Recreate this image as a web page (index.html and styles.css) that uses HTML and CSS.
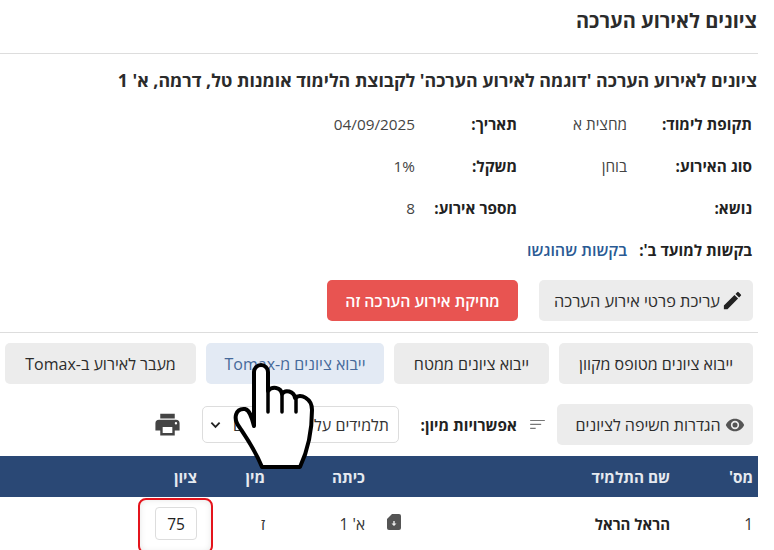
FILE: index.html
```html
<!DOCTYPE html>
<html lang="he" dir="rtl">
<head>
<meta charset="utf-8">
<title>ציונים לאירוע הערכה</title>
<link rel="stylesheet" href="styles.css">
</head>
<body>
<main class="page">
  <h1 class="title">ציונים לאירוע הערכה</h1>
  <h2 class="subtitle">ציונים לאירוע הערכה 'דוגמה לאירוע הערכה' לקבוצת הלימוד אומנות טל, דרמה, א' 1</h2>
  <div class="info">
    <b class="k1">תקופת לימוד:</b><span>מחצית א</span><b>תאריך:</b><span>04/09/2025</span>
    <b class="k1">סוג האירוע:</b><span>בוחן</span><b>משקל:</b><span>1%</span>
    <b class="k1">נושא:</b><span></span><b>מספר אירוע:</b><span>8</span>
    <b class="k1">בקשות למועד ב':</b><a class="link wide" href="#">בקשות שהוגשו</a>
  </div>
  <div class="actions">
    <button class="btn edit"><svg class="ic" viewBox="0 0 24 24"><path d="M3 17.25V21h3.75L17.81 9.94l-3.75-3.75L3 17.25zM20.71 7.04a1 1 0 0 0 0-1.41l-2.34-2.34a1 1 0 0 0-1.41 0l-1.83 1.83 3.75 3.75 1.83-1.83z"/></svg>עריכת פרטי אירוע הערכה</button>
    <button class="btn danger">מחיקת אירוע הערכה זה</button>
  </div>
  <div class="imports">
    <button class="btn b1">ייבוא ציונים מטופס מקוון</button>
    <button class="btn b2">ייבוא ציונים ממטח</button>
    <button class="btn b3 active">ייבוא ציונים מ-Tomax</button>
    <button class="btn b4">מעבר לאירוע ב-Tomax</button>
  </div>
  <div class="tools">
    <button class="btn eye"><svg class="ic ic-eye" viewBox="0 0 24 24"><path d="M12 4.5C7 4.5 2.73 7.61 1 12c1.73 4.39 6 7.5 11 7.5s9.27-3.11 11-7.5c-1.73-4.39-6-7.5-11-7.5zM12 17a5 5 0 1 1 0-10 5 5 0 0 1 0 10zm0-8a3 3 0 1 0 0 6 3 3 0 0 0 0-6z"/></svg>הגדרות חשיפה לציונים</button>
    <svg class="sort" viewBox="0 0 16 12"><path d="M0 1h16v1.3H0zM0 5.3h12v1.3H0zM0 9.6h6v1.3H0z"/></svg>
    <b class="sort-label">אפשרויות מיון:</b>
    <div class="select"><span>תלמידים על פי שמותיהם</span><svg class="chev" viewBox="0 0 12 8"><path d="M1.5 1.5 6 6l4.5-4.5" fill="none" stroke="#222" stroke-width="2"/></svg></div>
    <svg class="print" viewBox="0 0 24 24"><path d="M19 8H5a3 3 0 0 0-3 3v6h4v4h12v-4h4v-6a3 3 0 0 0-3-3zm-3 11H8v-5h8v5zm3-7a1 1 0 1 1 0-2 1 1 0 0 1 0 2zM18 3H6v4h12V3z"/></svg>
  </div>
  <div class="grid head">
    <span>מס'</span><span>שם התלמיד</span><span>כיתה</span><span>מין</span><span>ציון</span>
  </div>
  <div class="grid row">
    <span class="num">1</span>
    <b class="name">הראל הראל</b>
    <span class="cls">א' 1</span>
    <span class="gender">ז</span>
    <span class="grade"><input class="grade-input" value="75" aria-label="ציון"></span>
    <svg class="file" viewBox="0 0 14 16"><path d="M5 0h7a2 2 0 0 1 2 2v12a2 2 0 0 1-2 2H2a2 2 0 0 1-2-2V5z" fill="#555"/><path d="M6.3 7h1.4v2.5h1.8L7 12 4.500 9.500h1.800z" fill="#eee"/></svg>
  </div>
</main>
<svg class="hand" viewBox="230 358 90 116"><path d="M254 426V372a7 7 0 0 1 14 0v19c4-5 13-4 14 3 3-5 12-3 13 4 5-5 17 0 17 12 0 20-4 40-12 57h-38c-7-17-14-27-22-39-8-10-4-20 5-19 5 1 7 9 9 17z" fill="#fff" stroke="#000" stroke-width="4" stroke-linejoin="round"/><path d="M268 391v21M282 394v18M296 398v14" fill="none" stroke="#000" stroke-width="3.5" stroke-linecap="round"/></svg>
</body>
</html>
```
FILE: styles.css
```css
* { box-sizing: border-box; }
html, body { margin: 0; height: 550px; overflow: hidden; background: #fff; }
body { font-family: "Open Sans", "Noto Sans", "Liberation Sans", sans-serif; font-size: 15px; color: #333; position: relative; }
.page { width: 758px; margin-right: 16px; margin-left: 0; }
.title { margin: 0; height: 54px; padding: 9px 1px 0 0; font-size: 20px; line-height: 24px; font-weight: 700; color: #2b2b2b; border-bottom: 1.5px solid #ddd; }
.subtitle { margin: 0; padding: 15px 1px 0 0; height: 49px; font-size: 17.8px; line-height: 22px; font-weight: 700; color: #2b2b2b; white-space: nowrap; }
.info { display: grid; grid-template-columns: 125px 110px 102px 1fr; grid-auto-rows: 42px; padding-right: 6px; align-items: center; font-size: 15.3px; line-height: 20px; }
.info b { color: #222; font-weight: 700; white-space: nowrap; }
.info span { color: #444; }
.wide { grid-column: span 3; }
.link { color: #2a5a94; text-decoration: none; font-weight: 600; font-size: 16px; }
.actions { display: flex; gap: 21px; padding: 9px 5px 11px 0; border-bottom: 1.5px solid #ddd; }
.btn { height: 41px; border: 0; border-radius: 5px; background: #ececec; color: #2b2b2b; font: 400 16px/20px "Open Sans", "Noto Sans", sans-serif; display: flex; align-items: center; justify-content: center; gap: 4px; padding: 0; white-space: nowrap; }
.edit { width: 214px; padding-left: 6px; gap: 1px; font-size: 16.3px; }
.danger { width: 191px; background: #e85451; color: #fff; font-weight: 600; font-size: 15.8px; }
.imports { display: flex; gap: 10px; padding: 10px 5px 0 0; }
.b1 { width: 194px; }
.b2 { width: 155px; }
.b3 { width: 178px; }
.b4 { width: 191px; }
.active { background: #e3eaf4; color: #46699a; }
.tools { display: flex; align-items: center; height: 41px; margin-top: 20px; padding-right: 5px; }
.eye { width: 196px; padding-left: 10px; }
.ic { width: 23px; height: 23px; fill: #222; flex: none; }
.ic-eye { width: 20px; height: 20px; fill: #555; }
.sort { width: 15px; height: 11px; fill: #777; margin-right: 12px; flex: none; }
.sort-label { margin-right: 13px; font-size: 15.3px; color: #222; white-space: nowrap; width: 96px; flex: none; }
.select { width: 197px; height: 37px; margin-right: 22px; border: 1px solid #ddd; border-radius: 5px; display: flex; align-items: center; justify-content: space-between; padding: 0 9px 0 7px; color: #333; font-size: 16px; background: #fff; flex: none; }
.chev { width: 11px; height: 8px; }
.print { width: 29px; height: 29px; fill: #444; margin-right: 20px; flex: none; }
.grid { display: grid; grid-template-columns: 83px 305px 100px 68px 1fr; padding-right: 5px; align-items: center; }
.head { height: 41px; margin-top: 11px; background: #2a4875; color: #e6eaf0; font-weight: 700; font-size: 15.3px; }
.row { height: 53px; position: relative; color: #333; font-size: 15.5px; }
.name { color: #222; font-size: 15px; }
.grade { display: block; }
.grade-input { display: block; width: 42px; height: 33px; border: 1px solid #ddd; border-radius: 4px; text-align: center; font: 15.5px "Open Sans", sans-serif; color: #222; background: #fff; padding: 0; }
.grade::after { content: ""; position: absolute; left: 138px; top: 1px; width: 71px; height: 52px; border: 2px solid #e4141c; border-radius: 8px; box-shadow: inset 0 0 6px rgba(0, 0, 0, .1); }
.file { position: absolute; left: 387px; top: 17px; width: 14px; height: 16px; }
.hand { position: absolute; left: 230px; top: 358px; width: 90px; height: 116px; }
```
